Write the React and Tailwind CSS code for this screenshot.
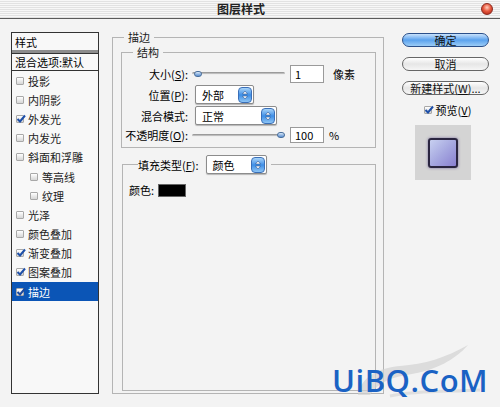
const cjk = { fontFamily: '"Noto Sans CJK SC", "Liberation Sans", sans-serif' };

function Check({ on, white }) {
  return (
    <span className="w-[8px] h-[8px] shrink-0 rounded-[1px] border border-[#a8a8a8] bg-gradient-to-b from-[#ffffff] to-[#d6d6d6] relative">
      {on && (
        <svg className="absolute -left-[1px] -top-[2px]" width="10" height="10" viewBox="0 0 10 10">
          <path d="M1.5 5 L4 7.5 L9 1.5" fill="none" stroke={white ? "#1a4aa0" : "#1d4fa8"} strokeWidth="2" />
        </svg>
      )}
    </span>
  );
}

function Row({ label, on, sub, active }) {
  return (
    <div
      className={`h-[19.2px] flex items-center gap-[4px] ${sub ? "pl-[18px]" : "pl-[4px]"} ${
        active ? "bg-[#0b55b6] text-white" : "text-[#222]"
      }`}
    >
      <Check on={on} white={active} />
      <span>{label}</span>
    </div>
  );
}

function AquaSelect({ value, width }) {
  return (
    <div
      className="h-[19px] flex items-center justify-between bg-white border border-[#8c8c8c] rounded-[2px] shadow-[0_1px_1px_rgba(0,0,0,0.25)] pl-[6px] pr-[1px]"
      style={{ width }}
    >
      <span>{value}</span>
      <span className="w-[14px] h-[16px] rounded-[4px] bg-gradient-to-b from-[#a8d4f8] via-[#3d8ee6] to-[#8cc4f4] border border-[#3a6fb8] flex items-center justify-center">
        <svg width="6" height="10" viewBox="0 0 6 10">
          <path d="M0.5 4 L3 1 L5.5 4 Z M0.5 6 L3 9 L5.5 6 Z" fill="#fff" stroke="#1b3f78" strokeWidth="0.5" />
        </svg>
      </span>
    </div>
  );
}

function Slider({ at }) {
  return (
    <div className="w-[93px] h-[10px] relative flex items-center">
      <div className="w-full h-[3px] rounded-full bg-gradient-to-b from-[#8a8a8a] to-[#d0d0d0] border-b border-[#eee]" />
      <div
        className={`absolute top-[2px] w-[8px] h-[6px] rounded-full bg-gradient-to-b from-[#d8e8f8] to-[#5b8fcf] border border-[#4a6f9c] ${
          at === "end" ? "right-0" : "left-[2px]"
        }`}
      />
    </div>
  );
}

function AquaButton({ children, primary }) {
  return (
    <div
      className={`h-[14px] w-[87px] rounded-full flex items-center justify-center border ${
        primary
          ? "border-[#2a4f8a] bg-gradient-to-b from-[#c8e2fb] via-[#5aa2ee] to-[#9bccf6] text-[#111]"
          : "border-[#666] bg-gradient-to-b from-[#ffffff] via-[#e6e6e6] to-[#f6f6f6] text-[#111]"
      }`}
    >
      {children}
    </div>
  );
}

export default function App() {
  return (
    <div className="w-[500px] h-[407px] overflow-hidden bg-[#f3f3f3] relative text-[11px] leading-[14px]" style={cjk}>
      {/* Title bar */}
      <div className="h-[19px] border-b border-[#5a5a5a] flex items-center justify-center relative bg-[repeating-linear-gradient(180deg,#f7f7f7_0px,#f7f7f7_1px,#e2e2e2_1px,#e2e2e2_2px)]">
        <span className="pr-[18px] text-[12px] font-bold text-[#222]">图层样式</span>
        <span className="absolute right-[7px] top-[3px] w-[12px] h-[12px] rounded-full border border-[#8a2a20] bg-[radial-gradient(circle_at_50%_35%,#ffd0c0_0%,#e85a40_45%,#a82010_100%)]" />
      </div>

      <div className="flex">
        {/* Style list */}
        <div className="ml-[11px] mt-[13px] w-[88px] h-[362px] border border-[#333] bg-[#f8f8f8]">
          <div className="h-[20px] flex items-center pl-[3px] border-b-[3px] border-[#8c8c8c]">样式</div>
          <div className="h-[18px] flex items-center pl-[3px] border-b border-t border-[#333]">混合选项:默认</div>
          <Row label="投影" />
          <Row label="内阴影" />
          <Row label="外发光" on />
          <Row label="内发光" />
          <Row label="斜面和浮雕" />
          <Row label="等高线" sub />
          <Row label="纹理" sub />
          <Row label="光泽" />
          <Row label="颜色叠加" />
          <Row label="渐变叠加" on />
          <Row label="图案叠加" on />
          <Row label="描边" on active />
        </div>

        {/* Middle panel */}
        <fieldset className="ml-[13px] mt-[11px] w-[272px] h-[364px] border border-[#b4b4b4] flex flex-col">
          <legend className="ml-[11px] px-[4px] text-[#222]">描边</legend>

          <fieldset className="ml-[8px] mr-[7px] mt-[1px] border border-[#b4b4b4] pt-[5px] pb-[4px]">
            <legend className="ml-[11px] px-[4px] text-[#222]">结构</legend>
            <div className="flex flex-col gap-[2px]">
              <div className="h-[19px] flex items-center">
                <span className="w-[66px] text-right">大小(<u>S</u>):</span>
                <span className="ml-[4px]"><Slider /></span>
                <span className="ml-[5px] w-[34px] h-[18px] bg-white border border-[#9a9a9a] flex items-center pl-[4px]">1</span>
                <span className="ml-[9px]">像素</span>
              </div>
              <div className="h-[19px] flex items-center">
                <span className="w-[66px] text-right">位置(<u>P</u>):</span>
                <span className="ml-[7px]"><AquaSelect value="外部" width={59} /></span>
              </div>
              <div className="h-[19px] flex items-center">
                <span className="w-[66px] text-right">混合模式:</span>
                <span className="ml-[7px]"><AquaSelect value="正常" width={82} /></span>
              </div>
              <div className="h-[16px] flex items-center">
                <span className="w-[66px] text-right">不透明度(<u>O</u>):</span>
                <span className="ml-[4px]"><Slider at="end" /></span>
                <span className="ml-[5px] w-[34px] h-[16px] bg-white border border-[#9a9a9a] flex items-center pl-[4px]">100</span>
                <span className="ml-[5px]">%</span>
              </div>
            </div>
          </fieldset>

          <fieldset className="ml-[9px] mr-[7px] mt-[7px] h-[236px] border border-[#b4b4b4]">
            <legend className="ml-[15px] pr-[4px] flex items-center gap-[7px]">
              <span>填充类型(<u>F</u>):</span>
              <AquaSelect value="颜色" width={61} />
            </legend>
            <div className="mt-[9px] pl-[6px] flex items-center gap-[4px]">
              <span>颜色:</span>
              <span className="w-[28px] h-[13px] bg-black border border-[#666]" />
            </div>
          </fieldset>
        </fieldset>

        {/* Buttons */}
        <div className="ml-[18px] mt-[14px] w-[87px] flex flex-col gap-[10px]">
          <AquaButton primary>确定</AquaButton>
          <AquaButton>取消</AquaButton>
          <AquaButton>新建样式(<u>W</u>)...</AquaButton>
          <div className="flex items-center justify-center gap-[4px] -mt-[2px] pl-[4px]">
            <Check on />
            <span>预览(<u>V</u>)</span>
          </div>
          <div className="ml-[13px] -mt-[2px] w-[56px] h-[55px] bg-[#d4d4d4] flex items-center justify-center">
            <div className="w-[30px] h-[30px] rounded-[3px] border-2 border-[#2a2540] bg-gradient-to-br from-[#c8d0f0] via-[#a6a8e0] to-[#8a80d0] shadow-[0_0_3px_rgba(60,40,120,0.6)]" />
          </div>
        </div>
      </div>

      {/* Watermark */}
      <div className="absolute left-[330px] top-[340px] w-[165px] h-[60px]">
        <svg className="absolute left-0 top-0" width="165" height="60" viewBox="0 0 165 60">
          <path
            d="M28 55 C30 40 45 28 70 26 C95 24 115 18 138 5 C125 20 105 30 82 34 C62 37 48 42 40 55 Z"
            fill="#d2d2d2"
            opacity="0.7"
          />
          <path d="M60 56 C90 50 120 52 150 50" fill="none" stroke="#d6d6d6" strokeWidth="3" opacity="0.7" />
        </svg>
        <span
          className="absolute left-[2px] top-[25px] text-[31px] leading-[31px] font-semibold text-[#1a62c4] tracking-[0.5px]"
          style={{ fontFamily: '"Open Sans", "Liberation Sans", sans-serif' }}
        >
          UiBQ.CoM
        </span>
      </div>
    </div>
  );
}
